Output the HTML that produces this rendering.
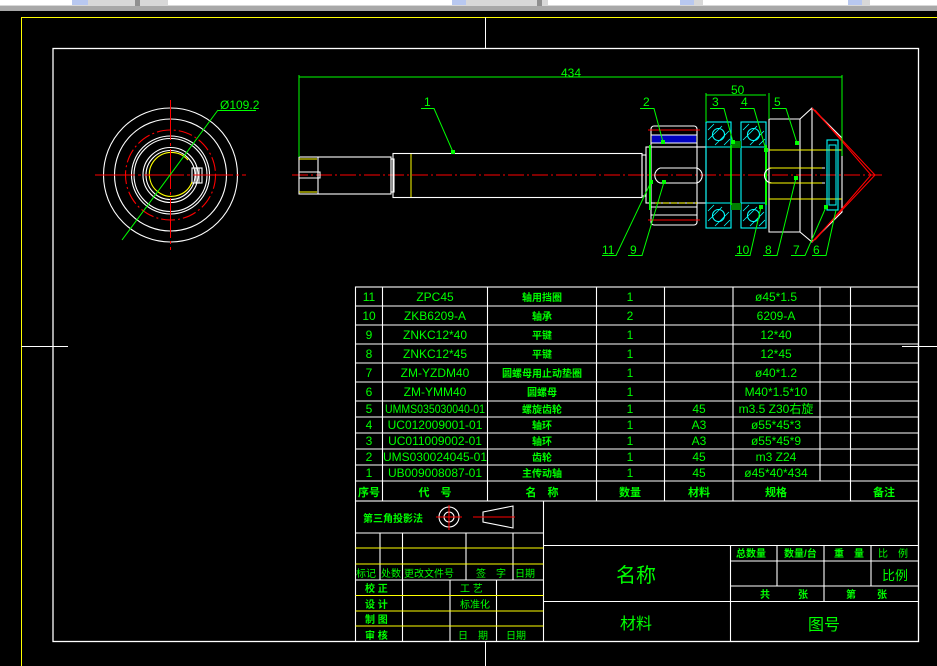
<!DOCTYPE html>
<html><head><meta charset="utf-8"><style>
html,body{margin:0;padding:0;background:#000;width:937px;height:666px;overflow:hidden}
svg{display:block}
text{font-family:"Liberation Sans","Noto Sans CJK SC",sans-serif;fill:#00ff00}
.t{font-size:12px}
.c{font-size:10px;font-weight:bold}
</style></head><body>
<svg width="937" height="666" viewBox="0 0 937 666" xmlns="http://www.w3.org/2000/svg">
<rect x="0" y="0" width="937" height="666" fill="#000"/>
<!-- toolbar -->
<rect x="0" y="0" width="937" height="11" fill="#a8a8a8"/>
<rect x="0" y="0" width="937" height="6" fill="#d8d8d8"/>
<rect x="0" y="0" width="72" height="5" fill="#fff"/>
<rect x="72" y="0" width="16" height="5" fill="#b8c8f0"/>
<rect x="135" y="0" width="5" height="6" fill="#909090"/>
<rect x="168" y="0" width="285" height="5" fill="#fff"/>
<rect x="452" y="0" width="14" height="5" fill="#b8c8f0"/>
<rect x="537" y="0" width="5" height="6" fill="#909090"/>
<rect x="548" y="0" width="140" height="5" fill="#fff"/>
<rect x="680" y="0" width="14" height="5" fill="#b8c8f0"/>
<rect x="703" y="0" width="150" height="5" fill="#fff"/>
<rect x="848" y="0" width="14" height="5" fill="#b8c8f0"/>
<rect x="870" y="0" width="67" height="5" fill="#fff"/>
<!-- frames -->
<polyline points="21.5,666 21.5,17.5 937,17.5" fill="none" stroke="#ffff00" stroke-width="1"/>
<rect x="53" y="48.5" width="865.5" height="593" fill="none" stroke="#fff" stroke-width="1.3"/>
<g stroke="#fff" stroke-width="1">
<line x1="485.5" y1="17.5" x2="485.5" y2="48.5"/>
<line x1="485.5" y1="642" x2="485.5" y2="666"/>
<line x1="21.5" y1="346.5" x2="68" y2="346.5"/>
<line x1="902" y1="346.5" x2="937" y2="346.5"/>
</g>
<!-- left view -->
<g fill="none" stroke="#fff" stroke-width="1.1">
<circle cx="170.5" cy="175" r="67"/>
<circle cx="170.5" cy="175" r="56"/>
<circle cx="170.5" cy="175" r="39"/>
<circle cx="170.5" cy="175" r="36.5"/>
<circle cx="170.5" cy="175" r="27.5"/>
<circle cx="170.5" cy="175" r="24.5"/>
<rect x="192" y="168" width="7" height="15"/>
<rect x="196" y="168" width="6" height="15"/>
</g>
<circle cx="170.5" cy="175" r="45" fill="none" stroke="#ff0000" stroke-width="1.1" stroke-dasharray="14 3 2 3"/>
<path d="M188 160 A22 22 0 1 0 192 182" fill="none" stroke="#ffff00" stroke-width="1.1"/>
<g stroke="#ff0000" stroke-width="1">
<line x1="170.5" y1="100" x2="170.5" y2="250" stroke-dasharray="40 3 3 3"/>
<line x1="95" y1="175" x2="246" y2="175" stroke-dasharray="40 3 3 3"/>
</g>
<line x1="122" y1="240" x2="218" y2="110" stroke="#00ff00" stroke-width="1"/>
<line x1="218" y1="110.5" x2="256" y2="110.5" stroke="#00ff00" stroke-width="1"/>
<text x="220" y="109" class="t">Ø109.2</text>
<!-- centerline main -->
<line x1="292" y1="175" x2="882" y2="175" stroke="#ff0000" stroke-width="1" stroke-dasharray="16 3 2 3"/>
<!-- shaft -->
<g fill="none" stroke="#fff" stroke-width="1.1">
<rect x="299" y="157" width="92" height="37"/>
<rect x="391" y="159" width="3" height="33"/>
<rect x="393" y="153.5" width="249" height="44"/>
<rect x="642" y="155" width="4" height="41"/>
<rect x="646" y="147" width="4" height="56"/>
<rect x="650" y="147" width="56" height="56"/>
<path d="M299 172 H320 V178 H299"/>
<line x1="318" y1="157" x2="318" y2="194"/>
</g>
<g stroke="#ffff00" stroke-width="1">
<line x1="411" y1="154" x2="411" y2="197"/>
<line x1="299" y1="159" x2="317" y2="159"/>
<line x1="299" y1="192" x2="317" y2="192"/>
</g>
<!-- gear part 2 -->
<g fill="none" stroke="#fff" stroke-width="1.1">
<rect x="651" y="126" width="46" height="99" rx="3"/>
<line x1="651" y1="135" x2="697" y2="135"/>
<line x1="651" y1="143" x2="697" y2="143"/>
<line x1="651" y1="207" x2="697" y2="207"/>
<line x1="651" y1="215" x2="697" y2="215"/>
<path d="M660 168 H697 A8 8 0 0 1 697 183 H660 A8 8 0 0 1 660 168"/>
</g>
<rect x="652" y="135.5" width="44" height="7" fill="#0000c0"/>
<g stroke="#ff0000" stroke-width="1"><line x1="648" y1="130" x2="700" y2="130"/><line x1="648" y1="220" x2="700" y2="220"/></g>
<line x1="655" y1="203" x2="697" y2="203" stroke="#ffff00" stroke-width="1" stroke-dasharray="6 2"/>
<line x1="650" y1="145" x2="650" y2="210" stroke="#00ff00" stroke-width="2"/>
<!-- bearings -->
<g fill="none" stroke="#00ffff" stroke-width="1.1">
<rect x="706" y="122" width="25" height="106"/>
<rect x="741" y="122" width="25" height="106"/>
<line x1="706" y1="147" x2="731" y2="147"/><line x1="706" y1="203" x2="731" y2="203"/>
<line x1="741" y1="147" x2="766" y2="147"/><line x1="741" y1="203" x2="766" y2="203"/>
<circle cx="718.5" cy="134.5" r="6"/><circle cx="753.5" cy="134.5" r="6"/>
<circle cx="718.5" cy="215.5" r="6"/><circle cx="753.5" cy="215.5" r="6"/>
<path d="M708 130 l6 -6 M708 140 l14 -14 M715 145 l14 -14 M724 145 l6 -6 M743 130 l6 -6 M743 140 l14 -14 M750 145 l14 -14 M759 145 l6 -6" stroke-width="0.8"/>
<path d="M708 211 l6 -6 M708 221 l14 -14 M715 226 l14 -14 M724 226 l6 -6 M743 211 l6 -6 M743 221 l14 -14 M750 226 l14 -14 M759 226 l6 -6" stroke-width="0.8"/>
</g>
<rect x="731" y="141" width="10" height="7" fill="#008000"/>
<rect x="731" y="203" width="10" height="7" fill="#008000"/>
<line x1="731" y1="145" x2="731" y2="205" stroke="#00ff00" stroke-width="1.5"/>
<line x1="766" y1="145" x2="766" y2="205" stroke="#00ff00" stroke-width="2"/>
<!-- part 5 -->
<g fill="none" stroke="#fff" stroke-width="1.1">
<path d="M769 119 H800 L812 108 L842 138 V212 L812 242 L800 232 H769 Z"/>
<line x1="800" y1="119" x2="800" y2="232"/>
<line x1="812" y1="108" x2="812" y2="242"/>
<path d="M772 168 H825 M772 183 H825 M772 168 A7 7 0 0 0 772 183"/>
</g>
<g stroke="#ffff00" stroke-width="1"><line x1="769" y1="150" x2="842" y2="150"/><line x1="769" y1="199" x2="842" y2="199"/><line x1="769" y1="168" x2="822" y2="168"/><line x1="769" y1="183" x2="822" y2="183"/></g>
<g fill="none" stroke="#ff0000" stroke-width="1.1">
<path d="M812 108 L875 175 L812 242"/>
<path d="M815 110 L871 175 L815 240"/>
</g>
<rect x="827" y="140" width="11" height="70" fill="none" stroke="#00ffff" stroke-width="1.1"/>
<rect x="829" y="145" width="7" height="60" fill="none" stroke="#00ffff" stroke-width="1"/>
<!-- dimensions -->
<g stroke="#00ff00" stroke-width="1" fill="none">
<line x1="299" y1="77" x2="842" y2="77"/>
<line x1="299" y1="75" x2="299" y2="157"/>
<line x1="842" y1="75" x2="842" y2="156"/>
<line x1="706" y1="95" x2="766" y2="95"/>
<line x1="706" y1="93" x2="706" y2="122"/>
<line x1="769" y1="93" x2="769" y2="119"/>
</g>
<text x="561" y="77" class="t">434</text>
<text x="731" y="94" class="t">50</text>
<!-- leaders -->
<g stroke="#00ff00" stroke-width="1" fill="none">
<path d="M421 108.5 H434 L453 152"/>
<path d="M640 108.5 H654 L663 142"/>
<path d="M710 108.5 H724 L733 142"/>
<path d="M740 108.5 H754 L766 150"/>
<path d="M772 108.5 H786 L797 143"/>
<path d="M602 255.5 H616 L651 182"/>
<path d="M628 255.5 H642 L664 182"/>
<path d="M735 255.5 H750 L761 207"/>
<path d="M763 255.5 H777 L796 178"/>
<path d="M791 255.5 H805 L826 207"/>
<path d="M812 255.5 H826 L836 210"/>
</g>
<g fill="#00ff00">
<rect x="451" y="150" width="4" height="4"/><rect x="661" y="140" width="4" height="4"/>
<rect x="731" y="140" width="4" height="4"/><rect x="764" y="148" width="4" height="4"/>
<rect x="795" y="141" width="4" height="4"/><rect x="649" y="180" width="4" height="4"/>
<rect x="662" y="180" width="4" height="4"/><rect x="759" y="205" width="4" height="4"/>
<rect x="794" y="176" width="4" height="4"/><rect x="824" y="205" width="4" height="4"/>
</g>
<g class="t">
<text x="424" y="106" class="t">1</text><text x="643" y="106" class="t">2</text>
<text x="712" y="106" class="t">3</text><text x="741" y="106" class="t">4</text>
<text x="774" y="106" class="t">5</text><text x="602" y="254" class="t">11</text>
<text x="630" y="254" class="t">9</text><text x="736" y="254" class="t">10</text>
<text x="765" y="254" class="t">8</text><text x="793" y="254" class="t">7</text>
<text x="813" y="254" class="t">6</text>
</g>
<!-- parts table -->
<g stroke="#fff" stroke-width="1.1" fill="none">
<rect x="355.5" y="287" width="563" height="214"/>
<path d="M355.5 306H918.5 M355.5 325H918.5 M355.5 344H918.5 M355.5 363H918.5 M355.5 382H918.5 M355.5 401H918.5 M355.5 417H918.5 M355.5 433H918.5 M355.5 449H918.5 M355.5 465H918.5 M355.5 481H918.5"/>
<path d="M382.5 287V501 M487.5 287V501 M596.5 287V501 M664.5 287V501 M733 287V501 M820 287V481 M850.5 287V501"/>
</g>
<g class="t" text-anchor="middle">
<text x="369" y="301">11</text><text x="435" y="301">ZPC45</text><text x="630" y="301">1</text><text x="776" y="301">ø45*1.5</text>
<text x="369" y="320">10</text><text x="435" y="320">ZKB6209-A</text><text x="630" y="320">2</text><text x="776" y="320">6209-A</text>
<text x="369" y="339">9</text><text x="435" y="339">ZNKC12*40</text><text x="630" y="339">1</text><text x="776" y="339">12*40</text>
<text x="369" y="358">8</text><text x="435" y="358">ZNKC12*45</text><text x="630" y="358">1</text><text x="776" y="358">12*45</text>
<text x="369" y="377">7</text><text x="435" y="377">ZM-YZDM40</text><text x="630" y="377">1</text><text x="776" y="377">ø40*1.2</text>
<text x="369" y="396">6</text><text x="435" y="396">ZM-YMM40</text><text x="630" y="396">1</text><text x="776" y="396">M40*1.5*10</text>
<text x="369" y="413">5</text><text x="435" y="413" textLength="100" lengthAdjust="spacingAndGlyphs">UMMS035030040-01</text><text x="630" y="413">1</text><text x="699" y="413">45</text><text x="776" y="413">m3.5 Z30右旋</text>
<text x="369" y="429">4</text><text x="435" y="429">UC012009001-01</text><text x="630" y="429">1</text><text x="699" y="429">A3</text><text x="776" y="429">ø55*45*3</text>
<text x="369" y="445">3</text><text x="435" y="445">UC011009002-01</text><text x="630" y="445">1</text><text x="699" y="445">A3</text><text x="776" y="445">ø55*45*9</text>
<text x="369" y="461">2</text><text x="435" y="461">UMS030024045-01</text><text x="630" y="461">1</text><text x="699" y="461">45</text><text x="776" y="461">m3 Z24</text>
<text x="369" y="477">1</text><text x="435" y="477">UB009008087-01</text><text x="630" y="477">1</text><text x="699" y="477">45</text><text x="776" y="477">ø45*40*434</text>
</g>
<g class="c" text-anchor="middle">
<text x="542" y="301">轴用挡圈</text><text x="542" y="320">轴承</text><text x="542" y="339">平键</text>
<text x="542" y="358">平键</text><text x="542" y="377">圆螺母用止动垫圈</text><text x="542" y="396">圆螺母</text>
<text x="542" y="413">螺旋齿轮</text><text x="542" y="429">轴环</text><text x="542" y="445">轴环</text>
<text x="542" y="461">齿轮</text><text x="542" y="477">主传动轴</text>
<text x="369" y="496" font-size="11">序号</text><text x="435" y="496" font-size="11">代　号</text>
<text x="542" y="496" font-size="11">名　称</text><text x="630" y="496" font-size="11">数量</text>
<text x="699" y="496" font-size="11">材料</text><text x="776" y="496" font-size="11">规格</text>
<text x="884" y="496" font-size="11">备注</text>
</g>
<!-- title block -->
<g stroke="#fff" stroke-width="1.1" fill="none">
<line x1="355.5" y1="501" x2="355.5" y2="642"/>
<line x1="543.5" y1="501" x2="543.5" y2="642"/>
<path d="M355.5 533H543.5 M355.5 580H543.5"/>
<path d="M380 533V580 M402.5 533V642 M466 533V580 M513 533V580 M450 580V642 M496.5 580V642"/>
<path d="M543.5 545.5H918.5 M543.5 601.5H918.5 M730.5 561H918.5 M730.5 586H918.5"/>
<path d="M730.5 545.5V642 M777 545.5V586 M824 545.5V601.5 M871 545.5V586"/>
<circle cx="449" cy="517" r="10"/><circle cx="449" cy="517" r="5"/>
<path d="M483 512 L513 506 V528 L483 522 Z"/>
</g>
<g stroke="#ffff00" stroke-width="1.1">
<path d="M355.5 548H543.5 M355.5 564H543.5 M355.5 595.5H543.5 M355.5 611H543.5 M355.5 626H543.5"/>
</g>
<g stroke="#ff0000" stroke-width="1"><line x1="436" y1="517" x2="462" y2="517"/><line x1="449" y1="505" x2="449" y2="530"/><line x1="473" y1="517" x2="515" y2="517"/></g>
<text x="363" y="522" class="c">第三角投影法</text>
<g class="t" font-size="10">
<text x="356" y="577" font-size="10">标记</text><text x="381" y="577" font-size="10">处数</text>
<text x="404" y="577" font-size="10">更改文件号</text><text x="476" y="577" font-size="10">签　字</text>
<text x="515" y="577" font-size="10">日期</text>
<text x="365" y="592" class="c">校 正</text><text x="460" y="592" font-size="10">工 艺</text>
<text x="365" y="608" class="c">设 计</text><text x="460" y="608" font-size="10">标准化</text>
<text x="365" y="623" class="c">制 图</text>
<text x="365" y="639" class="c">审 核</text><text x="458" y="639" font-size="10">日　期</text><text x="506" y="639" font-size="10">日期</text>
<text x="736" y="557" class="c">总数量</text><text x="784" y="557" class="c">数量/台</text>
<text x="834" y="557" class="c">重　量</text><text x="878" y="557" font-size="10">比　例</text>
<text x="882" y="580" font-size="13">比例</text>
<text x="760" y="598" class="c">共</text><text x="798" y="598" class="c">张</text>
<text x="846" y="598" class="c">第</text><text x="877" y="598" class="c">张</text>
</g>
<text x="616" y="582" font-size="20" style="font-family:'Noto Sans CJK SC',sans-serif">名称</text>
<text x="620" y="629" font-size="16" style="font-family:'Noto Sans CJK SC',sans-serif">材料</text>
<text x="808" y="630" font-size="16" style="font-family:'Noto Sans CJK SC',sans-serif">图号</text>
</svg>
</body></html>
